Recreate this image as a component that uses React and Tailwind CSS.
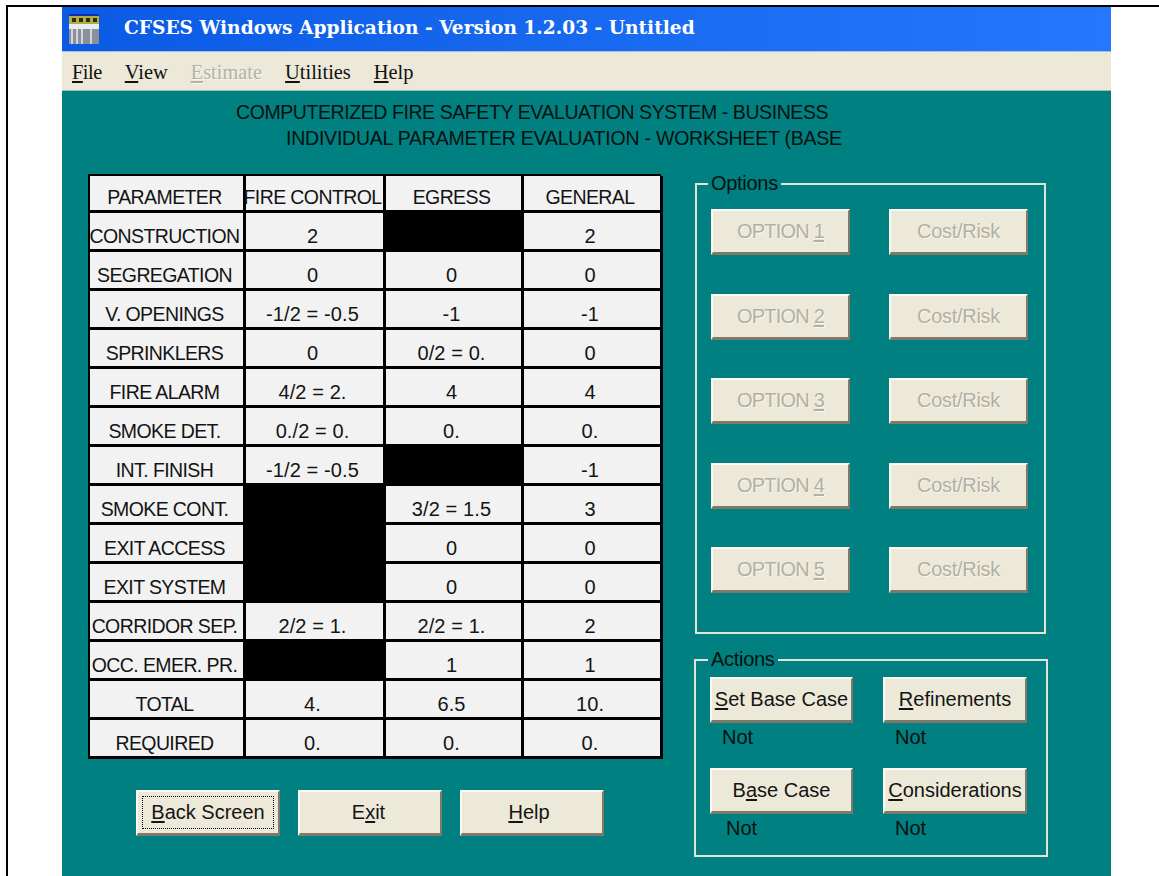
import React from 'react';

const rows = [
  ['PARAMETER', 'FIRE CONTROL', 'EGRESS', 'GENERAL'],
  ['CONSTRUCTION', '2', null, '2'],
  ['SEGREGATION', '0', '0', '0'],
  ['V. OPENINGS', '-1/2 = -0.5', '-1', '-1'],
  ['SPRINKLERS', '0', '0/2 = 0.', '0'],
  ['FIRE ALARM', '4/2 = 2.', '4', '4'],
  ['SMOKE DET.', '0./2 = 0.', '0.', '0.'],
  ['INT. FINISH', '-1/2 = -0.5', null, '-1'],
  ['SMOKE CONT.', null, '3/2 = 1.5', '3'],
  ['EXIT ACCESS', null, '0', '0'],
  ['EXIT SYSTEM', null, '0', '0'],
  ['CORRIDOR SEP.', '2/2 = 1.', '2/2 = 1.', '2'],
  ['OCC. EMER. PR.', null, '1', '1'],
  ['TOTAL', '4.', '6.5', '10.'],
  ['REQUIRED', '0.', '0.', '0.'],
];

const menus = [
  { key: 'F', rest: 'ile', className: 'tracking-[-0.5px]' },
  { key: 'V', rest: 'iew' },
  { key: 'E', rest: 'stimate', className: 'text-[#b5b2a4] [text-shadow:1px_1px_0_rgba(255,255,255,0.6)]' },
  { key: 'U', rest: 'tilities' },
  { key: 'H', rest: 'elp' },
];

// raised Win32 style button, label is split around the mnemonic letter
function WinButton({ before = '', mnemonic, after = '', disabled, focused, className = '' }) {
  return (
    <button
      className={`relative flex items-center justify-center whitespace-pre bg-[#ece9d8] border-t-2 border-l-2 border-t-[#fbfaf5] border-l-[#fbfaf5] border-r-2 border-b-[3px] border-r-[#7f7a68] border-b-[#7f7a68] pb-[1px] text-[20px] ${disabled ? 'text-[#b3b0a2] [text-shadow:1px_1px_0_rgba(255,255,255,0.6)]' : 'text-[#141414]'} ${className}`}
    >
      {focused && <span className="absolute inset-[4px] border border-dotted border-black" />}
      {before}
      {mnemonic && <span className="underline underline-offset-2">{mnemonic}</span>}
      {after}
    </button>
  );
}

function StatusText({ className = '' }) {
  return <div className={`text-[20px] leading-[24px] text-[#03110f] ${className}`}>Not</div>;
}

function AppIcon() {
  return (
    <svg width="30" height="30" viewBox="0 0 30 30" className="shrink-0">
      <rect x="0" y="0" width="30" height="2" fill="#0a2fb0" />
      <rect x="0" y="2" width="30" height="8" fill="#b4ae3c" />
      <path d="M3 4h4v4H3zM10 4h4v4h-4zM17 4h4v4h-4zM24 4h4v4h-4z" fill="#2a2a20" />
      <rect x="0" y="10" width="30" height="5" fill="#e8edf5" />
      <rect x="0" y="15" width="30" height="15" fill="#8b8f9a" />
      <path d="M3 13v17M8 13v17M13 13v17M22 13v17" stroke="#e8edf5" strokeWidth="1.5" />
    </svg>
  );
}

export default function App() {
  return (
    <div className="w-[1159px] h-[876px] overflow-hidden bg-white pt-[5px] font-['Liberation_Sans',sans-serif]">
      <div className="h-[871px] ml-[6px] border-t-2 border-l-2 border-black pl-[54px]">
        <div className="w-[1049px] h-[869px] flex flex-col">
          {/* title bar */}
          <div className="h-[45px] shrink-0 bg-gradient-to-r from-[#0a5ae4] to-[#2478fb] border-b border-b-[#a9bfe0] flex items-center pl-[7px] gap-[25px]">
            <AppIcon />
            <span className="font-['DejaVu_Serif',serif] font-bold text-[18.6px] text-white mb-[2px]">
              CFSES Windows Application - Version 1.2.03 - Untitled
            </span>
          </div>

          {/* menu bar */}
          <div className="h-[39px] shrink-0 bg-[#ece9d8] border-b border-b-[#9cbfb4] flex items-center pl-[10px] pt-[3px] gap-[23px] font-['Liberation_Serif',serif] text-[20.4px] text-[#111]">
            {menus.map((m) => (
              <span key={m.key} className={m.className}>
                <span className="underline underline-offset-2">{m.key}</span>
                {m.rest}
              </span>
            ))}
          </div>

          <div className="flex-1 bg-[#008080] relative">
            <div className="pt-[8px] h-[83px] text-[19.5px] leading-[26px] text-[#03110f]">
              <div className="pl-[174px] tracking-[-0.42px]">COMPUTERIZED FIRE SAFETY EVALUATION SYSTEM - BUSINESS</div>
              <div className="pl-[224px] tracking-[-0.22px]">INDIVIDUAL PARAMETER EVALUATION - WORKSHEET (BASE</div>
            </div>

            <div className="flex items-start">
              <div className="ml-[26px] w-[573px]">
                {/* worksheet grid */}
                <div className="grid grid-cols-[156px_140px_138px_139px] grid-rows-[37px_repeat(14,39px)] border-t-2 border-l-2 border-black">
                  {rows.flat().map((cell, i) => (
                    <div
                      key={i}
                      className={`border-r-[3px] border-b-[3px] border-black flex items-end justify-center pb-[1px] pr-[4px] whitespace-nowrap leading-[24px] text-[#141414] ${i < 4 || i % 4 === 0 ? 'text-[19.5px] tracking-[-0.6px]' : 'text-[20px] tracking-[0.1px]'} ${cell === null ? 'bg-black' : 'bg-[#f2f2f2]'}`}
                    >
                      {cell}
                    </div>
                  ))}
                </div>

                <div className="flex mt-[31px] ml-[48px] gap-[18px]">
                  <WinButton mnemonic="B" after="ack Screen" focused className="w-[144px] h-[46px]" />
                  <WinButton before="E" mnemonic="x" after="it" className="w-[144px] h-[46px] pr-[3px]" />
                  <WinButton mnemonic="H" after="elp" className="w-[144px] h-[46px] pr-[6px]" />
                </div>
              </div>

              <div className="ml-[33px] w-[354px] pt-[9px]">
                {/* options group */}
                <div className="relative w-[351px] h-[451px] border-2 border-[#e4e2d6] ml-[1px]">
                  <span className="absolute -top-[14px] left-[11px] bg-[#008080] px-[3px] text-[20px] leading-[24px] tracking-[-0.3px] text-[#03110f]">Options</span>
                  <div className="grid grid-cols-[139px_139px] gap-x-[39px] grid-rows-[repeat(5,46px)] gap-y-[38.5px] ml-[14px] mt-[24px]">
                    {[1, 2, 3, 4, 5].map((n) => (
                      <React.Fragment key={n}>
                        <WinButton before="OPTION " mnemonic={String(n)} disabled className="tracking-[-0.8px]" />
                        <WinButton before="Cost/Risk" disabled className="tracking-[-0.3px]" />
                      </React.Fragment>
                    ))}
                  </div>
                </div>

                {/* actions group */}
                <div className="relative w-[354px] h-[198px] border-2 border-[#e4e2d6] mt-[25px]">
                  <span className="absolute -top-[14px] left-[12px] bg-[#008080] px-[3px] text-[20px] leading-[24px] tracking-[-0.3px] text-[#03110f]">Actions</span>
                  <div className="grid grid-cols-[143px_144px] gap-x-[30px] ml-[14px] mt-[16px]">
                    <WinButton mnemonic="S" after="et Base Case" className="h-[46px]" />
                    <WinButton mnemonic="R" after="efinements" className="h-[46px]" />
                    <StatusText className="pl-[12px] pt-[2px] h-[45px]" />
                    <StatusText className="pl-[12px] pt-[2px] h-[45px]" />
                    <WinButton before="B" mnemonic="a" after="se Case" className="h-[46px]" />
                    <WinButton mnemonic="C" after="onsiderations" className="h-[46px]" />
                    <StatusText className="pl-[16px] pt-[2px]" />
                    <StatusText className="pl-[12px] pt-[2px]" />
                  </div>
                </div>
              </div>
            </div>
          </div>
        </div>
      </div>
    </div>
  );
}
